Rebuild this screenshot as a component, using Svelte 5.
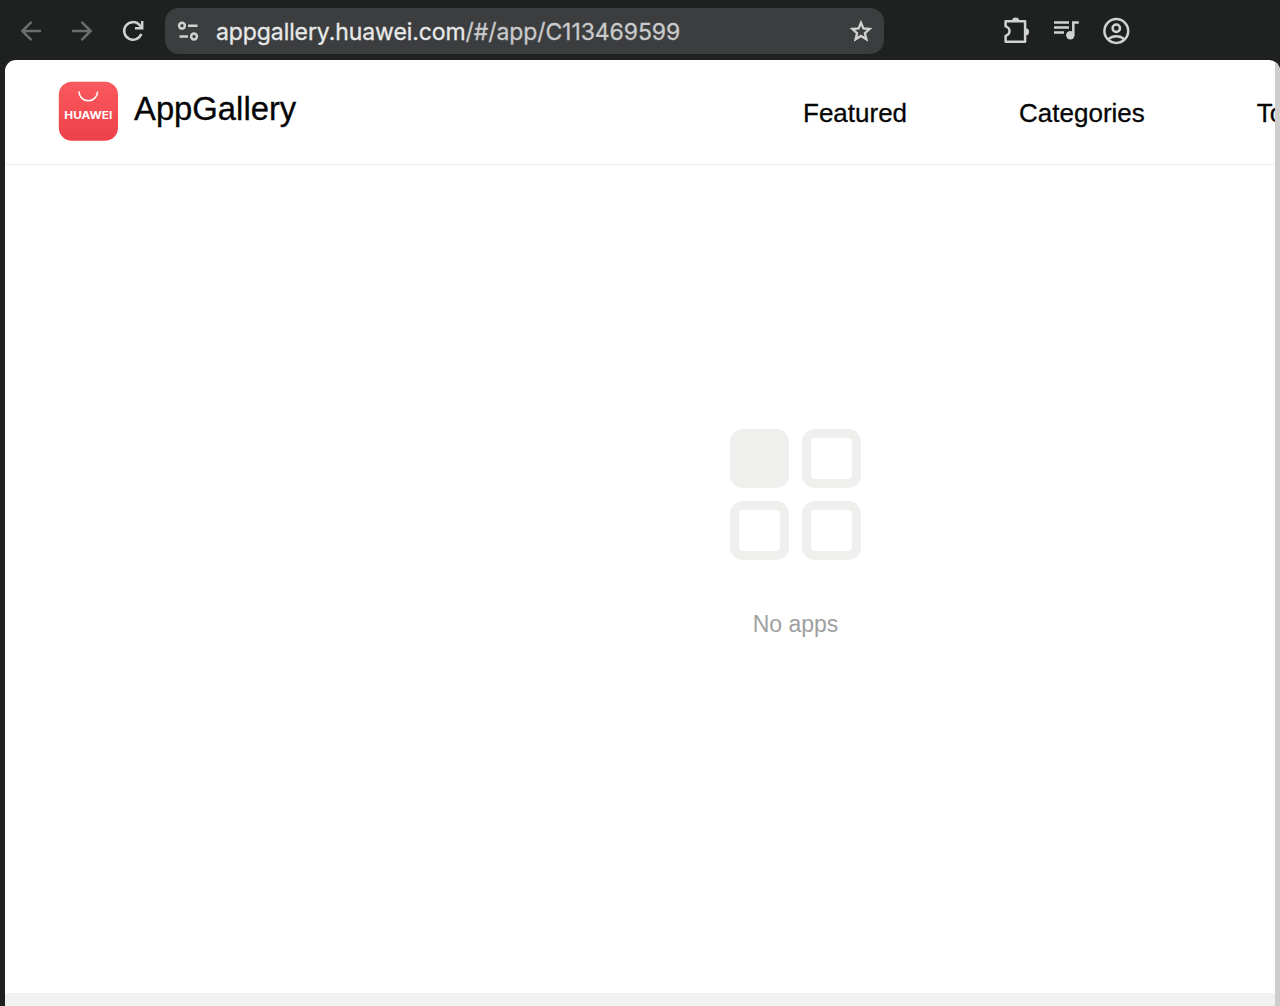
<script>
  const host = 'appgallery.huawei.com';
  const path = '/#/app/C113469599';
  const links = ['Featured', 'Categories', 'To'];
</script>

<div class="browser">
  <header class="toolbar">
    <div class="history">
      <svg class="dim" width="26" height="26" viewBox="0 0 26 26">
        <path d="M23 13H4.5M13.5 3.8 4.3 13l9.2 9.2" />
      </svg>
      <svg class="dim" width="26" height="26" viewBox="0 0 26 26">
        <path d="M3 13h18.5M12.5 3.8l9.2 9.2-9.2 9.2" />
      </svg>
      <svg width="26" height="26" viewBox="0 0 26 26">
        <path d="M21.3 15.8A8.800 8.800 0 1 1 19.4 6.900L22 9.300M22.200 3v7.200H15" />
      </svg>
    </div>

    <div class="omnibox">
      <svg width="24" height="24" viewBox="0 0 24 24">
        <circle cx="6" cy="6.7" r="2.9" />
        <path d="M12 6.7h9.500M3.500 17.500H12" />
        <circle cx="18" cy="17.500" r="2.900" />
      </svg>
      <span class="url">{host}<span class="path">{path}</span></span>
      <svg class="star" width="26" height="26" viewBox="0 0 26 26">
        <path d="M13 4.800l2.400 5.700 6.200.5-4.700 4.100 1.500 6.100-5.400-3.300-5.400 3.300 1.500-6.100-4.700-4.100 6.200-.5z" />
      </svg>
    </div>

    <div class="actions">
      <svg width="30" height="30" viewBox="0 0 30 30">
        <path d="M4.600 5.200h19.500v20.500H4.600v-5.800c5.200-1.700 5.200-8 0-9.500z" stroke-linejoin="round" />
        <path class="solid" d="M11 5a3.600 3.600 0 0 1 7.200 0zM24.500 12.200a3.600 3.600 0 0 1 0 7.200z" />
      </svg>
      <svg width="30" height="30" viewBox="0 0 30 30">
        <path d="M3 6.400h15M3 11.500h15M3 16.600h10M22.300 19V6.400h5.500" />
        <circle class="solid" cx="19.300" cy="19.200" r="4.200" />
      </svg>
      <svg width="30" height="30" viewBox="0 0 30 30">
        <circle cx="15.300" cy="15" r="11.900" />
        <circle cx="15.300" cy="12.200" r="3.700" />
        <path d="M7.300 23.200c4.300-4.100 11.700-4.100 16 0" />
      </svg>
    </div>
  </header>

  <div class="window">
    <main class="page">
      <div class="site-header">
        <div class="brand">
          <svg class="logo" width="60" height="60" viewBox="0 0 60 60">
            <defs>
              <linearGradient id="red" x1="0" y1="0" x2="0" y2="1">
                <stop offset="0" stop-color="#fa5a5f" />
                <stop offset="1" stop-color="#ee4048" />
              </linearGradient>
            </defs>
            <rect x=".8" y=".8" width="59.200" height="59" rx="13" fill="url(#red)" />
            <path d="M21 10.500a9.300 9.300 0 0 0 18.600 0" />
            <text x="6.300" y="38" textLength="48" lengthAdjust="spacingAndGlyphs">HUAWEI</text>
          </svg>
          <span class="name">AppGallery</span>
        </div>
        <nav>
          {#each links as link}
            <span>{link}</span>
          {/each}
        </nav>
      </div>

      <section class="empty">
        <div class="tiles">
          <i class="filled"></i><i></i><i></i><i></i>
        </div>
        <p>No apps</p>
      </section>

      <div class="footer"></div>
    </main>
    <div class="scrollbar"></div>
  </div>
</div>

<style>
  :global(body) {
    margin: 0;
    overflow: hidden;
    background: #1f2120;
  }

  .browser {
    width: 1280px;
    height: 1006px;
    display: flex;
    flex-direction: column;
    overflow: hidden;
    background: #1f2120;
    font-family: "Liberation Sans", Arial, sans-serif;
  }

  svg {
    display: block;
    flex: none;
    fill: none;
    stroke: #d0d2d1;
    stroke-width: 2.5;
  }

  .solid {
    fill: #d0d2d1;
    stroke: none;
  }

  /* Toolbar */
  .toolbar {
    height: 60px;
    display: flex;
    align-items: center;
    padding: 2px 0 0 18px;
    box-sizing: border-box;
    flex: none;
  }

  .history {
    display: flex;
    gap: 25px;
    width: 147px;
  }

  .dim {
    stroke: #6c6e6d;
  }

  .omnibox {
    width: 719px;
    height: 46px;
    box-sizing: border-box;
    padding: 0 10px 0 11px;
    display: flex;
    align-items: center;
    border-radius: 14px;
    background: #3c3d3f;
  }

  .url {
    flex: 1;
    margin: 1px 0 0 16px;
    font-family: Inter, sans-serif;
    font-size: 23px;
    letter-spacing: -0.09px;
    white-space: nowrap;
    color: #e8e9e9;
    -webkit-text-stroke: 0.3px;
  }

  .path {
    color: #c9cacb;
  }

  .star {
    stroke-width: 2.3;
  }

  .actions {
    display: flex;
    gap: 20px;
    margin-left: 117px;
  }

  /* Page */
  .window {
    flex: 1;
    display: flex;
    margin-left: 5px;
    border-radius: 11px 11px 0 0;
    overflow: hidden;
    background: #fff;
  }

  .page {
    width: 1270px;
    display: flex;
    flex-direction: column;
    overflow: hidden;
  }

  .scrollbar {
    width: 5px;
    background: #cdcdcd;
  }

  .site-header {
    height: 105px;
    box-sizing: border-box;
    flex: none;
    display: flex;
    padding-left: 53px;
    border-bottom: 1px solid #ededed;
    color: #050505;
  }

  .brand {
    display: flex;
    width: 745px;
    flex: none;
    padding-top: 21px;
  }

  .logo rect {
    stroke: none;
  }

  .logo path {
    stroke: #fff;
    stroke-width: 1.6;
  }

  .logo text {
    font: 700 11px Inter, sans-serif;
    fill: #fff;
    stroke: none;
  }

  .name {
    margin: 9px 0 0 16px;
    font-size: 32.8px;
    line-height: 38px;
    -webkit-text-stroke: 0.3px;
  }

  nav {
    display: flex;
    gap: 112px;
    padding-top: 38px;
    font-size: 26px;
    line-height: 30px;
    white-space: nowrap;
    -webkit-text-stroke: 0.3px;
  }

  .empty {
    flex: 1;
    display: flex;
    flex-direction: column;
    align-items: center;
    padding: 264px 0 0 311px;
  }

  .tiles {
    display: grid;
    grid-template-columns: 59px 59px;
    gap: 13px;
  }

  .tiles i {
    height: 59px;
    box-sizing: border-box;
    border: 9.5px solid #efefed;
    border-radius: 13px;
  }

  .tiles .filled {
    background: #efefed;
  }

  p {
    margin: 50px 0 0;
    font-size: 23px;
    line-height: 28px;
    color: #a0a0a0;
  }

  .footer {
    height: 13px;
    flex: none;
    background: #f1f1f1;
  }
</style>
